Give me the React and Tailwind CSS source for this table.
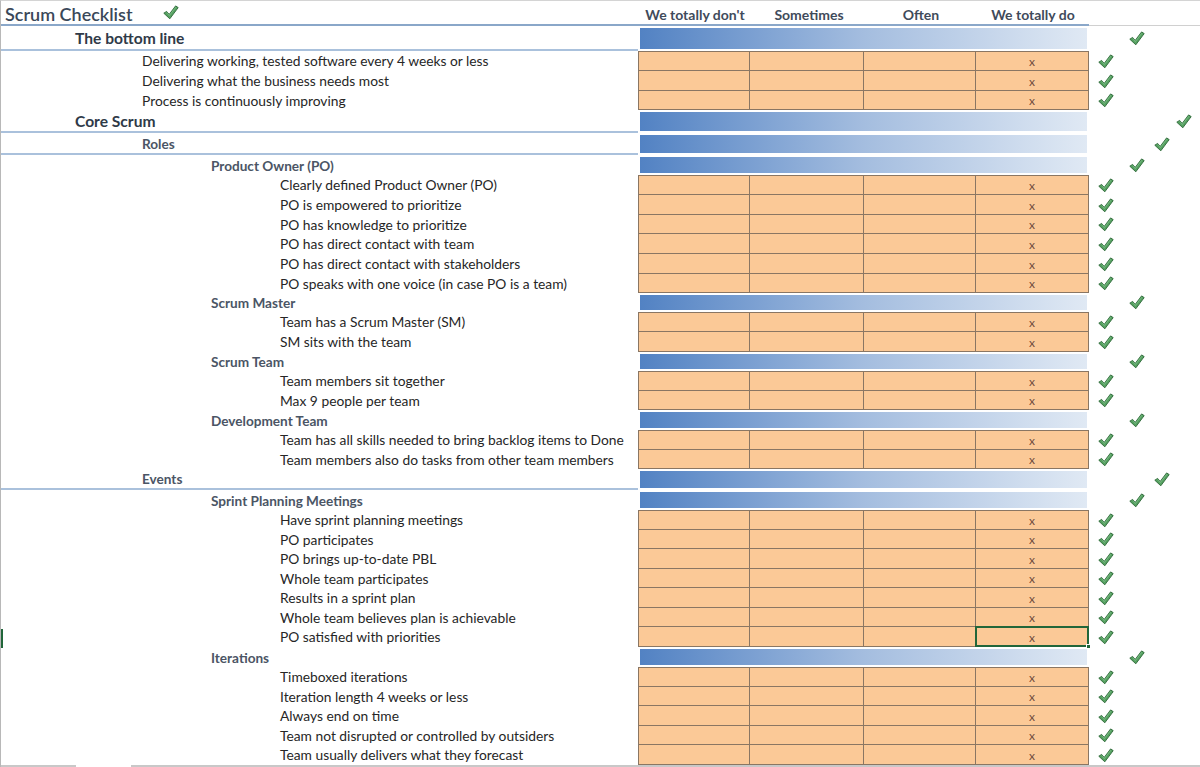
import React from "react";

const H = {
  19: "h-[19px]",
  20: "h-[20px]",
  21: "h-[21px]",
  22: "h-[22px]",
  23: "h-[23px]",
  25: "h-[25px]",
};

const INDENT = {
  1: "pl-[74px]",
  2: "pl-[141px]",
  3: "pl-[210px]",
  4: "pl-[279px]",
};

const CHK = {
  9: "ml-[9px]",
  40: "ml-[40px]",
  65: "ml-[65px]",
  87: "ml-[87px]",
};

const CELLS = ["w-[112px] border-l", "w-[114px]", "w-[112px]", "w-[113px]"];

function Check() {
  return (
    <svg width="16" height="15" viewBox="0 0 16 15" className="shrink-0">
      <path
        d="M0.8 8.2 L3.6 6.4 L6.2 9.4 L12.6 0.9 L15.2 2.6 L6.8 13.8 Z"
        fill="#55a060"
        stroke="#2c6838"
        strokeWidth="0.9"
        strokeLinejoin="round"
      />
      <path d="M4 7.6 L6.3 10.6 L12.9 2.2" fill="none" stroke="#84c58f" strokeWidth="0.7" />
    </svg>
  );
}

const sec = (kind, text, h, lvl, chk, line) => ({ type: "sec", kind, text, h, lvl, chk, line });
const item = (text, h, lvl = 4, sel = false) => ({ type: "item", text, h, lvl, sel });

const rows = [
  sec(1, "The bottom line", 25, 1, 40, true),
  item("Delivering working, tested software every 4 weeks or less", 20, 2),
  item("Delivering what the business needs most", 20, 2),
  item("Process is continuously improving", 19, 2),
  sec(1, "Core Scrum", 23, 1, 87, true),
  sec(2, "Roles", 22, 2, 65, true),
  sec(2, "Product Owner (PO)", 20, 3, 40),
  item("Clearly defined Product Owner (PO)", 20),
  item("PO is empowered to prioritize", 20),
  item("PO has knowledge to prioritize", 19),
  item("PO has direct contact with team", 20),
  item("PO has direct contact with stakeholders", 20),
  item("PO speaks with one voice (in case PO is a team)", 19),
  sec(2, "Scrum Master", 19, 3, 40),
  item("Team has a Scrum Master (SM)", 20),
  item("SM sits with the team", 20),
  sec(2, "Scrum Team", 19, 3, 40),
  item("Team members sit together", 20),
  item("Max 9 people per team", 19),
  sec(2, "Development Team", 20, 3, 40),
  item("Team has all skills needed to bring backlog items to Done", 20),
  item("Team members also do tasks from other team members", 19),
  sec(2, "Events", 21, 2, 65, true),
  sec(2, "Sprint Planning Meetings", 20, 3, 40),
  item("Have sprint planning meetings", 20),
  item("PO participates", 19),
  item("PO brings up-to-date PBL", 20),
  item("Whole team participates", 19),
  item("Results in a sprint plan", 20),
  item("Whole team believes plan is achievable", 19),
  item("PO satisfied with priorities", 20, 4, true),
  sec(2, "Iterations", 20, 3, 40),
  item("Timeboxed iterations", 20),
  item("Iteration length 4 weeks or less", 19),
  item("Always end on time", 20),
  item("Team not disrupted or controlled by outsiders", 19),
  item("Team usually delivers what they forecast", 20),
];

function SectionRow({ r }) {
  const textCls =
    r.kind === 1
      ? "text-[15.6px] font-bold text-[#2f3a48]"
      : "text-[13.6px] font-bold text-[#4b5565]";
  return (
    <div className={`flex ${H[r.h]}`}>
      <div
        className={`w-[637px] flex items-center pt-[3px] ${INDENT[r.lvl]} ${
          r.line ? "border-b-2 border-[#aac1dc]" : ""
        }`}
      >
        <span className={`leading-none ${textCls}`}>{r.text}</span>
      </div>
      <div className="w-[451px] py-[2px] px-[2px]">
        <div className="h-full bg-gradient-to-r from-[#5282c3] via-[#a4bddf] to-[#e0e9f4]" />
      </div>
      <div className={`flex items-center ${CHK[r.chk]}`}>
        <Check />
      </div>
    </div>
  );
}

function ItemRow({ r, first }) {
  return (
    <div className={`flex ${H[r.h]}`}>
      <div className={`w-[637px] flex items-center ${INDENT[r.lvl]}`}>
        <span className="leading-none text-[13.8px] text-[#262626]">{r.text}</span>
      </div>
      {CELLS.map((c, i) => (
        <div
          key={i}
          className={`${c} relative h-full bg-[#fbc997] border-r border-b border-[#8a7663] ${
            first ? "border-t" : ""
          } flex items-center justify-center pt-[2px]`}
        >
          {i === 3 && <span className="text-[12px] text-[#6f4b3c] leading-none">x</span>}
          {i === 3 && r.sel && (
            <>
              <div className="absolute -left-px -top-px -right-px -bottom-px border-2 border-[#21663a]" />
              <div className="absolute -right-[3px] -bottom-[3px] w-[5px] h-[5px] bg-[#21663a] border border-white" />
            </>
          )}
        </div>
      ))}
      <div className={`flex items-center ${CHK[9]}`}>
        <Check />
      </div>
    </div>
  );
}

export default function App() {
  return (
    <div
      className="w-[1200px] h-[767px] overflow-hidden bg-white relative border-t border-[#d4d4d4] border-l border-l-[#b8b8b8]"
      style={{ fontFamily: "Lato, 'Open Sans', sans-serif" }}
    >
      {/* title row */}
      <div className="flex h-[25px]">
        <div className="w-[1088px] flex border-b-2 border-[#8aa7c9]">
          <div className="w-[636px] flex items-center pt-[3px] pl-[4px]">
            <span className="leading-none text-[18px] font-semibold text-[#3a4859]">Scrum Checklist</span>
            <span className="ml-[30px] -mt-[4px]">
              <Check />
            </span>
          </div>
          {["We totally don't", "Sometimes", "Often", "We totally do"].map((t, i) => (
            <div
              key={t}
              className={`${["w-[116px]", "w-[112px]", "w-[112px]", "w-[112px]"][i]} flex items-center justify-center pt-[4px] leading-none text-[14px] font-bold text-[#3f4b5b]`}
            >
              {t}
            </div>
          ))}
        </div>
        <div className="flex-1 border-b border-[#d0d0d0]" />
      </div>

      {rows.map((r, idx) =>
        r.type === "sec" ? (
          <SectionRow key={idx} r={r} />
        ) : (
          <ItemRow key={idx} r={r} first={rows[idx - 1].type !== "item"} />
        )
      )}

      <div className="flex h-[2px]">
        <div className="w-[75px] bg-[#c8c8c8]" />
        <div className="w-[55px]" />
        <div className="flex-1 bg-[#c8c8c8]" />
      </div>

      {/* active row marker on the left edge */}
      <div className="absolute left-0 top-[628px] w-[2px] h-[19px] bg-[#21663a]" />
    </div>
  );
}
